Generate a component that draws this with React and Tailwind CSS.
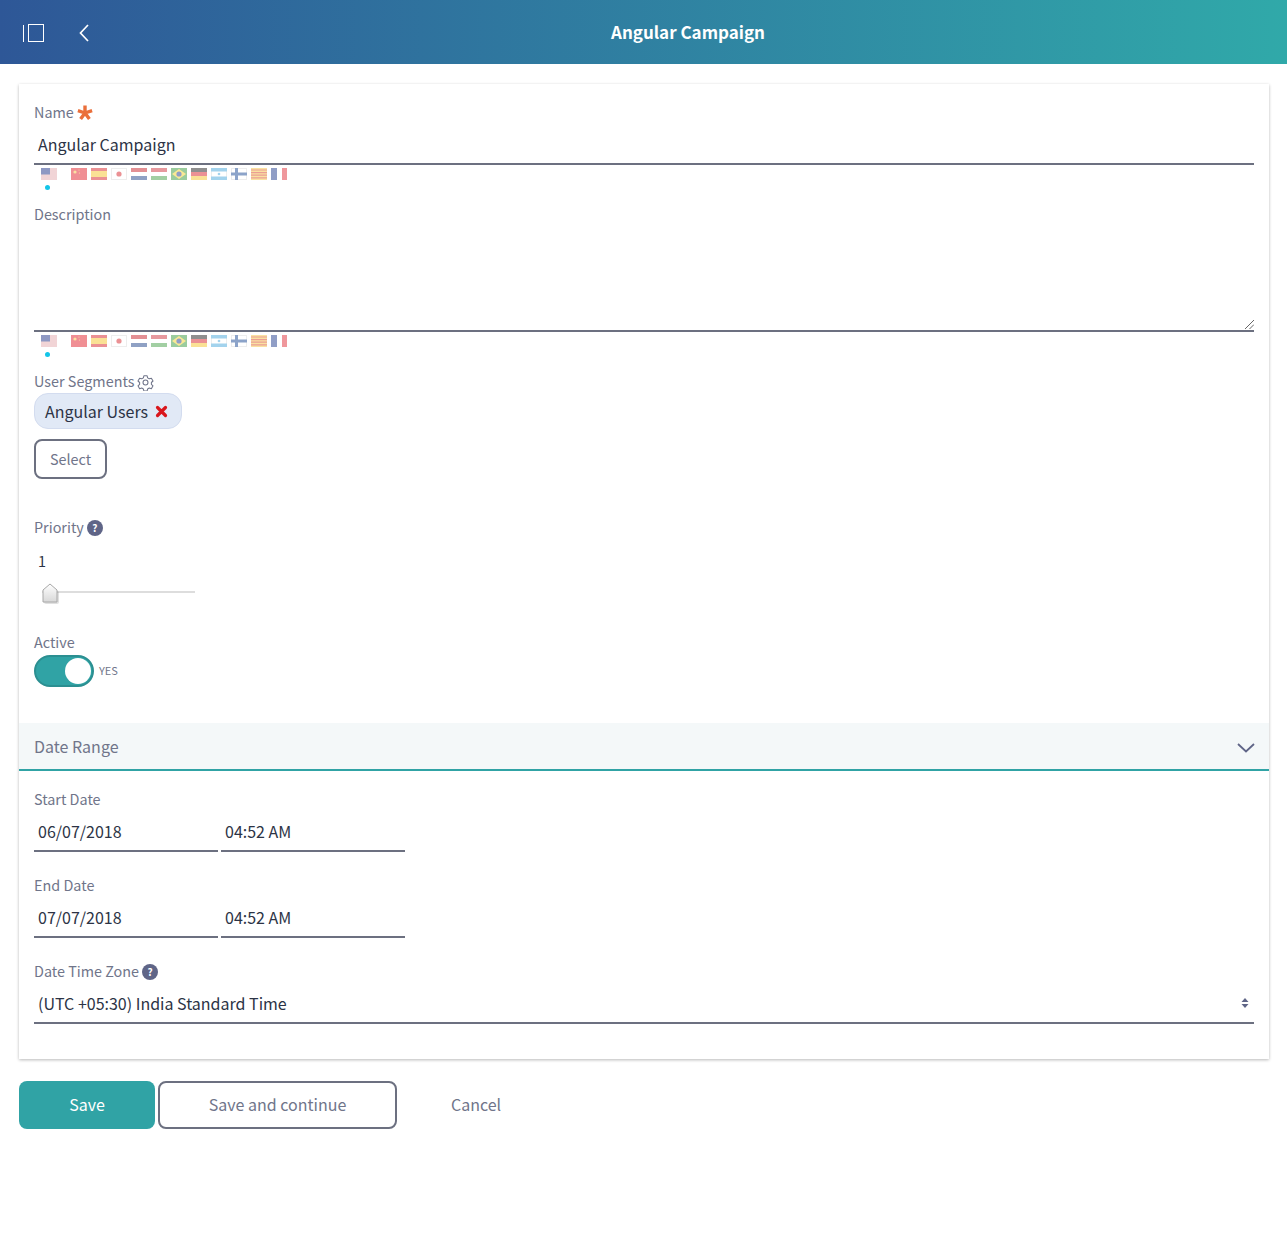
import React from 'react';

function Flag({ children }) {
  return (
    <svg width="16" height="12" viewBox="0 0 16 12" className="block opacity-50 shrink-0">
      {children}
    </svg>
  );
}

const Us = () => (
  <Flag>
    <rect width="16" height="12" fill="#fff" />
    <path d="M0 1h16M0 3h16M0 5h16M0 7h16M0 9h16M0 11h16" stroke="#c9565e" strokeWidth="1" />
    <rect width="9" height="6.500" fill="#1f3488" />
  </Flag>
);
const Cn = () => (
  <Flag>
    <rect width="16" height="12" fill="#e3222c" />
    <circle cx="4" cy="4" r="1.6" fill="#f6c445" />
    <circle cx="8" cy="2" r=".6" fill="#f6c445" />
    <circle cx="8.5" cy="5" r=".6" fill="#f6c445" />
  </Flag>
);
const Es = () => (
  <Flag>
    <rect width="16" height="12" fill="#d8262c" />
    <rect y="3" width="16" height="6" fill="#f7c52d" />
  </Flag>
);
const Jp = () => (
  <Flag>
    <rect x=".5" y=".5" width="15" height="11" fill="#fff" stroke="#ddd" />
    <circle cx="8" cy="6" r="2.6" fill="#d8262c" />
  </Flag>
);
const Nl = () => (
  <Flag>
    <rect width="16" height="4" fill="#c8242c" />
    <rect y="4" width="16" height="4" fill="#fff" />
    <rect y="8" width="16" height="4" fill="#21468b" />
  </Flag>
);
const Hu = () => (
  <Flag>
    <rect width="16" height="4" fill="#d0353f" />
    <rect y="4" width="16" height="4" fill="#fff" />
    <rect y="8" width="16" height="4" fill="#47a04a" />
  </Flag>
);
const Br = () => (
  <Flag>
    <rect width="16" height="12" fill="#3a9b3f" />
    <path d="M8 1l7 5-7 5-7-5z" fill="#f6d32d" />
    <circle cx="8" cy="6" r="2.6" fill="#23408f" />
  </Flag>
);
const De = () => (
  <Flag>
    <rect width="16" height="4" fill="#222" />
    <rect y="4" width="16" height="4" fill="#d8262c" />
    <rect y="8" width="16" height="4" fill="#f7c52d" />
  </Flag>
);
const Ar = () => (
  <Flag>
    <rect x=".5" y=".5" width="15" height="11" fill="#fff" stroke="#ddd" />
    <rect width="16" height="3.5" fill="#4aa8dc" />
    <rect y="8.5" width="16" height="3.5" fill="#4aa8dc" />
    <circle cx="8" cy="6" r="1.3" fill="#4aa8dc" />
  </Flag>
);
const Fi = () => (
  <Flag>
    <rect x=".5" y=".5" width="15" height="11" fill="#fff" stroke="#ddd" />
    <rect x="4" width="3" height="12" fill="#1c4a94" />
    <rect y="4.5" width="16" height="3" fill="#1c4a94" />
  </Flag>
);
const Ca = () => (
  <Flag>
    <rect width="16" height="12" fill="#f7c445" />
    <path d="M0 2h16M0 4.6h16M0 7.2h16M0 9.8h16" stroke="#d8402c" strokeWidth="1.2" />
  </Flag>
);
const Fr = () => (
  <Flag>
    <rect width="6" height="12" fill="#23408f" />
    <rect x="6" width="5" height="12" fill="#fff" />
    <rect x="11" width="5" height="12" fill="#e0323c" />
  </Flag>
);

function FlagRow() {
  return (
    <div className="h-[26px] pt-[3px] pl-[7px]">
      <div className="flex">
        <div className="w-[30px] shrink-0">
          <Us />
          <div className="w-[5px] h-[5px] rounded-full bg-[#13c5e8] mt-[5px] ml-[4px]" />
        </div>
        <div className="flex gap-[4px]">
          <Cn />
          <Es />
          <Jp />
          <Nl />
          <Hu />
          <Br />
          <De />
          <Ar />
          <Fi />
          <Ca />
          <Fr />
        </div>
      </div>
    </div>
  );
}

function Label({ children }) {
  return (
    <div className="flex items-center gap-[3px] h-[20px] pb-[2px] text-[14.4px] leading-[18px] text-[#70758a]">
      {children}
    </div>
  );
}

function Help() {
  return (
    <span className="w-[16px] h-[16px] mt-[2px] rounded-full bg-[#5f6587] text-white text-[10px] leading-[16px] font-bold text-center">
      ?
    </span>
  );
}

function Field({ value }) {
  return (
    <div className="w-[184px] h-[42px] pl-[4px] border-b-2 border-[#6c7080] text-[16px] leading-[42px] text-[#2c3345]">
      {value}
    </div>
  );
}

export default function App() {
  return (
    <div className="min-h-[1234px] bg-white font-['Noto_Sans_CJK_SC',sans-serif]">
      <header className="h-[64px] flex items-center bg-gradient-to-r from-[#2e5797] to-[#30a9a9] text-white">
        <div className="flex items-center pl-[23px] gap-[4px] mt-[2px]">
          <div className="w-px h-[17px] bg-white" />
          <div className="w-[16px] h-[18px] border border-white" />
        </div>
        <svg width="10" height="18" viewBox="0 0 10 18" className="ml-[35px] mt-[2px]" fill="none">
          <path d="M9 1L1.500 9 9 17" stroke="#fff" strokeWidth="1.700" />
        </svg>
        <h1 className="flex-1 text-center text-[17px] font-bold leading-[24px]">Angular Campaign</h1>
      </header>

      <main className="pl-[19px] pr-[18px] pt-[20px]">
        <section className="h-[975px] bg-white shadow-[0_1px_3px_rgba(0,0,0,0.28)]">
          <div className="px-[15px] pt-[19px] h-[639px]">
            <Label>
              Name
              <svg width="16" height="16" viewBox="0 0 16 16" className="mt-[2px]">
                <path d="M8 8V.5M8 8l7.100-2.300M8 8l4.400 6.100M8 8l-4.400 6.100M8 8L.9 5.700" stroke="#ea6f3a" strokeWidth="3.400" />
              </svg>
            </Label>
            <div className="h-[41px] mt-[1px] pl-[4px] border-b-2 border-[#6c7080] text-[16px] leading-[40px] text-[#2c3345]">
              Angular Campaign
            </div>
            <FlagRow />

            <div className="mt-[14px]">
              <Label>Description</Label>
            </div>
            <div className="h-[107px] border-b-2 border-[#6c7080] relative">
              <svg width="9" height="9" viewBox="0 0 9 9" className="absolute right-0 bottom-[1px]">
                <path d="M0 9L9 0M4.500 9L9 4.500" stroke="#666" strokeWidth="1" />
              </svg>
            </div>
            <FlagRow />

            <div className="mt-[14px]">
              <Label>
                User Segments
                <svg width="17" height="17" viewBox="0 0 24 24" fill="none" stroke="currentColor" strokeWidth="1.500" className="mt-[2px]">
                  <path d="M9.700 2.500h4.600l.7 3 2.300 1.300 3-.9 2.300 4-2.300 2.100v2.600l2.300 2.100-2.300 4-3-.9-2.300 1.300-.7 3H9.700l-.7-3-2.300-1.300-3 .9-2.300-4 2.300-2.100v-2.600L1.400 9.900l2.300-4 3 .9L9 5.500z" strokeLinejoin="round" />
                  <circle cx="12" cy="12" r="3.500" />
                </svg>
              </Label>
            </div>
            <div className="mt-[1px] w-[148px] h-[36px] flex items-center pl-[10px] gap-[7px] rounded-[14px] bg-[#e1e9f6] border border-[#d3dcef] text-[16px] text-[#2c3345]">
              Angular Users
              <svg width="13" height="13" viewBox="0 0 13 13">
                <path d="M2.500 2.500l8 8M10.500 2.500l-8 8" stroke="#d9161c" strokeWidth="3.200" strokeLinecap="round" />
              </svg>
            </div>
            <button className="mt-[10px] w-[73px] h-[40px] block rounded-[8px] border-2 border-[#6c7080] bg-white text-[14.4px] text-[#70758a]">
              Select
            </button>

            <div className="mt-[39px]">
              <Label>
                Priority
                <Help />
              </Label>
            </div>
            <div className="mt-[13px] pl-[4px] h-[20px] text-[14.4px] leading-[20px] text-[#2c3345]">1</div>
            <div className="mt-[9px] h-[24px] w-[161px] flex items-center relative">
              <div className="w-[153px] ml-[8px] h-[2px] bg-[#dddddd]" />
              <svg width="20" height="22" viewBox="0 0 20 22" className="absolute left-[7px] top-[3px]">
                <defs>
                  <linearGradient id="thumb" x1="0" y1="0" x2="0" y2="1">
                    <stop offset="0" stopColor="#ffffff" />
                    <stop offset="1" stopColor="#d8d8d8" />
                  </linearGradient>
                </defs>
                <rect x="3" y="8" width="15" height="13" rx="2" fill="#000000" opacity="0.12" />
                <path d="M9 1l7 6v12H2V7z" fill="url(#thumb)" stroke="#a8a8a8" strokeWidth="1" />
              </svg>
            </div>

            <div className="mt-[29px]">
              <Label>Active</Label>
            </div>
            <div className="flex items-center gap-[5px] mt-[2px]">
              <div className="w-[60px] h-[32px] rounded-full bg-[#30a3a5] border-2 border-[#2b8f91] flex items-center justify-end pr-[1px]">
                <div className="w-[26px] h-[26px] rounded-full bg-white" />
              </div>
              <span className="mb-[2px] text-[11px] leading-[16px] text-[#70758a]">YES</span>
            </div>
          </div>

          <div className="h-[48px] flex items-center justify-between pl-[15px] pr-[14px] bg-[#f4f8f9] border-b-2 border-[#30a3a5] text-[16px] text-[#70758a]">
            Date Range
            <svg width="18" height="10" viewBox="0 0 18 10" fill="none" className="mt-[4px]">
              <path d="M1 1l8 7.500L17 1" stroke="#5f6587" strokeWidth="1.800" />
            </svg>
          </div>

          <div className="px-[15px] pt-[19px]">
            <Label>Start Date</Label>
            <div className="flex gap-[3px]">
              <Field value="06/07/2018" />
              <Field value="04:52 AM" />
            </div>
            <div className="mt-[24px]">
              <Label>End Date</Label>
            </div>
            <div className="flex gap-[3px]">
              <Field value="07/07/2018" />
              <Field value="04:52 AM" />
            </div>
            <div className="mt-[24px]">
              <Label>
                Date Time Zone
                <Help />
              </Label>
            </div>
            <div className="h-[42px] pt-[2px] flex items-center justify-between pl-[4px] pr-[5px] border-b-2 border-[#6c7080] text-[16px] text-[#2c3345]">
              (UTC +05:30) India Standard Time
              <svg width="8" height="12" viewBox="0 0 8 12">
                <path d="M4 1l3.500 4h-7zM4 11l3.500-4h-7z" fill="#5f6587" />
              </svg>
            </div>
          </div>
        </section>

        <div className="flex items-center mt-[22px] text-[16px]">
          <button className="w-[136px] h-[48px] pb-[2px] rounded-[8px] bg-[#30a3a5] text-white">Save</button>
          <button className="ml-[3px] w-[239px] h-[48px] pb-[2px] rounded-[8px] border-2 border-[#6c7080] bg-white text-[#70758a]">
            Save and continue
          </button>
          <button className="ml-[54px] pb-[2px] text-[#70758a]">Cancel</button>
        </div>
      </main>
    </div>
  );
}
